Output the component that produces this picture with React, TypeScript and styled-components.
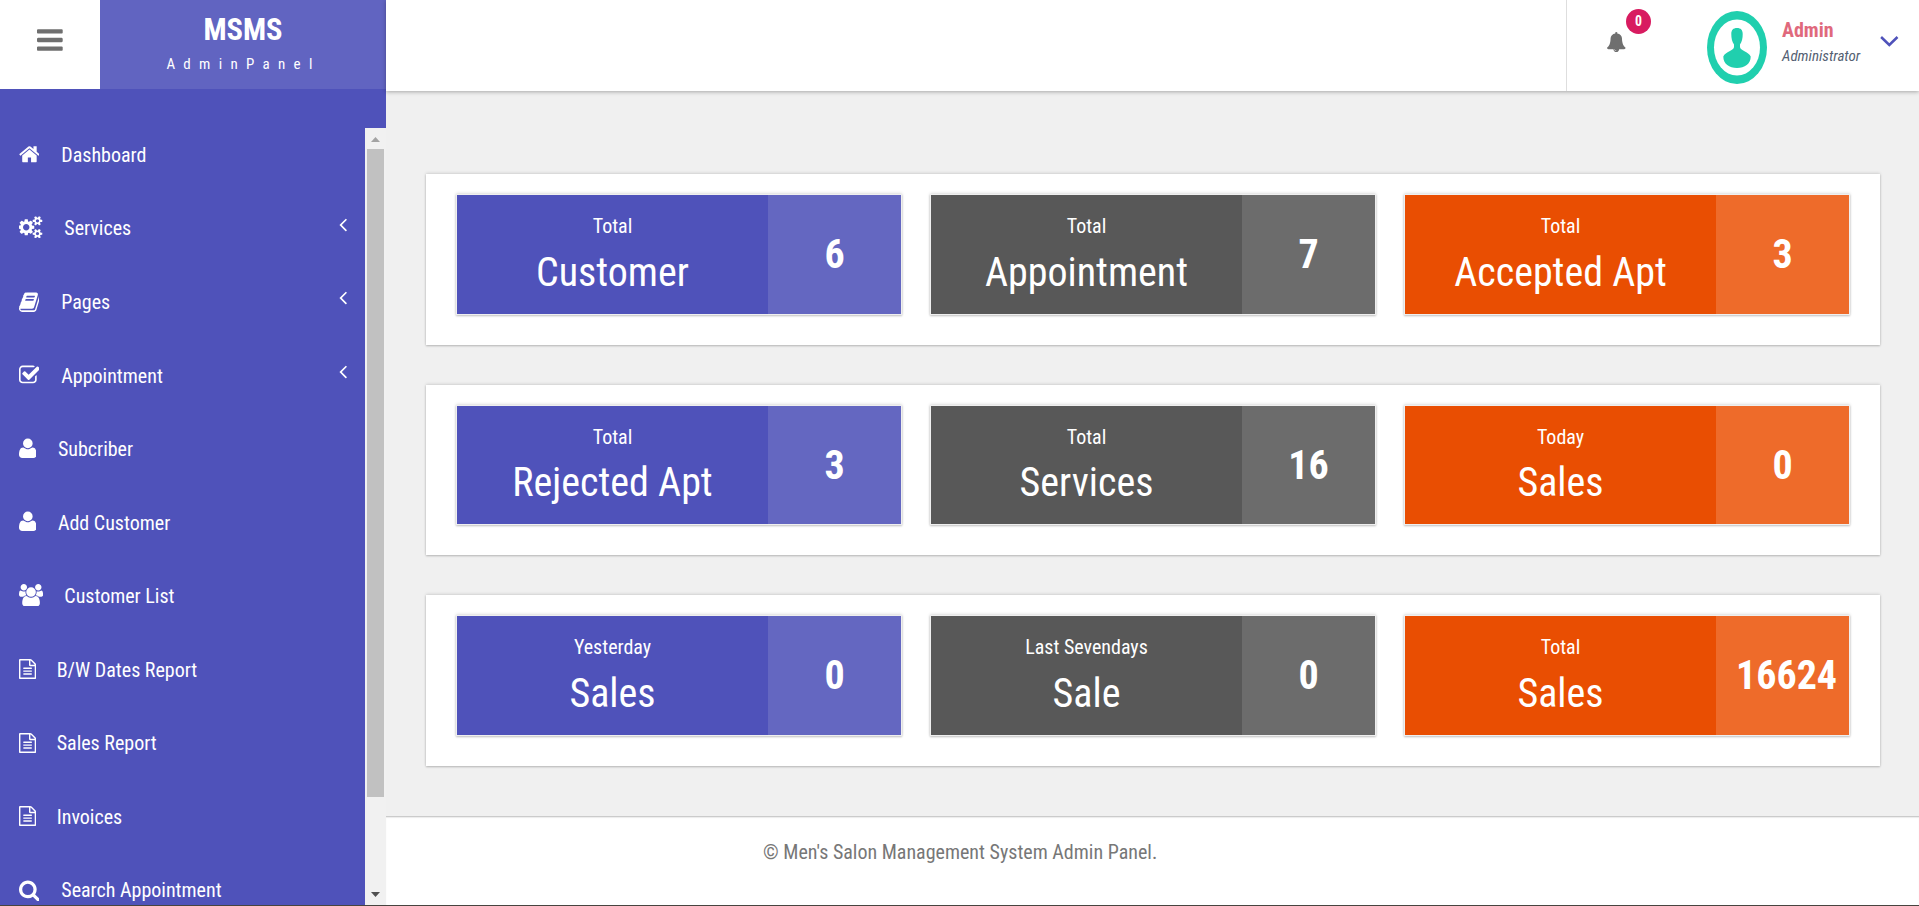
import React from "react";
import styled, { createGlobalStyle } from "styled-components";

const GlobalStyle = createGlobalStyle`
  *, *::before, *::after { box-sizing: border-box; }
  body {
    margin: 0;
    overflow: hidden;
    background: #f0f0f0;
    font-family: "Roboto Condensed", Roboto, sans-serif;
    font-stretch: 75%;
    font-size: 20px;
    color: #777;
  }
`;

const glyphs = {
  bars: "M1664 1344v128q0 26-19 45t-45 19h-1408q-26 0-45-19t-19-45v-128q0-26 19-45t45-19h1408q26 0 45 19t19 45zm0-512v128q0 26-19 45t-45 19h-1408q-26 0-45-19t-19-45v-128q0-26 19-45t45-19h1408q26 0 45 19t19 45zm0-512v128q0 26-19 45t-45 19h-1408q-26 0-45-19t-19-45v-128q0-26 19-45t45-19h1408q26 0 45 19t19 45z",
  home: "M1472 992v480q0 26-19 45t-45 19h-384v-384h-256v384h-384q-26 0-45-19t-19-45v-480q0-1 .5-3t.5-3l575-474 575 474q1 2 1 6zm223-69l-62 74q-8 9-21 11h-3q-13 0-21-7l-692-577-692 577q-12 8-24 7-13-2-21-11l-62-74q-8-10-7-23.5t11-21.5l719-599q32-26 76-26t76 26l244 204v-195q0-14 9-23t23-9h192q14 0 23 9t9 23v408l219 182q10 8 11 21.5t-7 23.5z",
  cogs: "M832 896q0-106-75-181t-181-75-181 75-75 181 75 181 181 75 181-75 75-181zm768 512q0-52-38-90t-90-38-90 38-38 90q0 53 37.5 90.5t90.5 37.5 90.5-37.5 37.5-90.5zm0-1024q0-52-38-90t-90-38-90 38-38 90q0 53 37.5 90.5t90.5 37.5 90.5-37.5 37.5-90.5zm-384 421v185q0 10-7 19.5t-16 10.5l-155 24q-11 35-32 76 34 48 90 115 7 11 7 20 0 12-7 19-23 30-82.5 89.5t-78.5 59.5q-11 0-21-7l-115-90q-37 19-77 31-11 108-23 155-7 24-30 24h-186q-11 0-20-7.5t-10-17.5l-23-153q-34-10-75-31l-118 89q-7 7-20 7-11 0-21-8-144-133-144-160 0-9 7-19 10-14 41-53t47-61q-23-44-35-82l-152-24q-10-1-17-9.5t-7-19.5v-185q0-10 7-19.5t16-10.5l155-24q11-35 32-76-34-48-90-115-7-11-7-20 0-12 7-20 22-30 82-89t79-59q11 0 21 7l115 90q34-18 77-32 11-108 23-154 7-24 30-24h186q11 0 20 7.5t10 17.5l23 153q34 10 75 31l118-89q8-7 20-7 11 0 21 8 144 133 144 160 0 8-7 19-12 16-42 54t-45 60q23 48 34 82l152 23q10 2 17 10.5t7 19.5zm640 533v140q0 16-149 31-12 27-30 52 51 113 51 138 0 4-4 7-122 71-124 71-8 0-46-47t-52-68q-20 2-30 2t-30-2q-14 21-52 68t-46 47q-2 0-124-71-4-3-4-7 0-25 51-138-18-25-30-52-149-15-149-31v-140q0-16 149-31 13-29 30-52-51-113-51-138 0-4 4-7 4-2 35-20t59-34 30-16q8 0 46 46.5t52 67.5q20-2 30-2t30 2q51-71 92-112l6-2q4 0 124 70 4 3 4 7 0 25-51 138 17 23 30 52 149 15 149 31zm0-1024v140q0 16-149 31-12 27-30 52 51 113 51 138 0 4-4 7-122 71-124 71-8 0-46-47t-52-68q-20 2-30 2t-30-2q-14 21-52 68t-46 47q-2 0-124-71-4-3-4-7 0-25 51-138-18-25-30-52-149-15-149-31v-140q0-16 149-31 13-29 30-52-51-113-51-138 0-4 4-7 4-2 35-20t59-34 30-16q8 0 46 46.5t52 67.5q20-2 30-2t30 2q51-71 92-112l6-2q4 0 124 70 4 3 4 7 0 25-51 138 17 23 30 52 149 15 149 31z",
  book: "M1703 478q40 57 18 129l-275 906q-19 64-76.5 107.5t-122.5 43.5h-923q-77 0-148.5-53.5t-99.5-131.5q-24-67-2-127 0-4 3-27t4-37q1-8-3-21.5t-3-19.5q2-11 8-21t16.5-23.5 16.5-23.5q23-38 45-91.5t30-91.5q3-10 .5-30t-.5-28q3-11 17-28t17-23q21-36 42-92t25-90q1-9-2.5-32t.5-28q4-13 22-30.5t22-22.5q19-26 42.5-84.5t27.5-96.5q1-8-3-25.5t-2-26.5q2-8 9-18t18-23 17-21q8-12 16.5-30.5t15-35 16-36 19.5-32 26.5-23.5 36-11.5 47.5 5.5l-1 3q38-9 51-9h761q74 0 114 56t18 130l-274 906q-36 119-71.5 153.5t-128.5 34.5h-869q-27 0-38 15-11 16-1 43 24 70 144 70h923q29 0 56-15.5t35-41.5l300-987q7-22 5-57 38 15 59 43zm-1064 2q-4 13 2 22.5t20 9.5h608q13 0 25.5-9.5t16.5-22.5l21-64q4-13-2-22.5t-20-9.5h-608q-13 0-25.5 9.5t-16.5 22.5zm-83 256q-4 13 2 22.5t20 9.5h608q13 0 25.5-9.5t16.5-22.5l21-64q4-13-2-22.5t-20-9.5h-608q-13 0-25.5 9.5t-16.5 22.5z",
  check: "M1472 930v318q0 119-84.5 203.5t-203.5 84.5h-832q-119 0-203.5-84.5t-84.5-203.5v-832q0-119 84.5-203.5t203.5-84.5h832q63 0 117 25 15 7 18 23 3 17-9 29l-49 49q-10 10-23 10-3 0-9-2-23-6-45-6h-832q-66 0-113 47t-47 113v832q0 66 47 113t113 47h832q66 0 113-47t47-113v-254q0-13 9-22l64-64q10-10 23-10 6 0 12 3 20 8 20 29zm231-489l-814 814q-24 24-57 24t-57-24l-430-430q-24-24-24-57t24-57l110-110q24-24 57-24t57 24l263 263 647-647q24-24 57-24t57 24l110 110q24 24 24 57t-24 57z",
  user: "M1600 1405q0 120-73 189.5t-194 69.5h-874q-121 0-194-69.5t-73-189.5q0-53 3.5-103.5t14-109 26.5-108.5 43-97.5 62-81 85.5-53.5 111.5-20q9 0 42 21.5t74.5 48 108 48 133.5 21.5 133.5-21.5 108-48 74.5-48 42-21.5q61 0 111.5 20t85.5 53.5 62 81 43 97.5 26.5 108.5 14 109 3.5 103.5zm-320-893q0 159-112.5 271.5t-271.5 112.5-271.5-112.5-112.5-271.5 112.5-271.5 271.5-112.5 271.5 112.5 112.5 271.5z",
  users: "M593 896q-162 5-265 128h-134q-82 0-138-40.5t-56-118.5q0-353 124-353 6 0 43.5 21t97.5 42.5 119 21.5q67 0 133-23-5 37-5 66 0 139 81 256zm1071 637q0 120-73 189.5t-194 69.5h-874q-121 0-194-69.5t-73-189.5q0-53 3.5-103.5t14-109 26.5-108.5 43-97.5 62-81 85.5-53.5 111.5-20q10 0 43 21.5t73 48 107 48 135 21.5 135-21.5 107-48 73-48 43-21.5q61 0 111.5 20t85.5 53.5 62 81 43 97.5 26.5 108.5 14 109 3.5 103.5zm-1024-1277q0 106-75 181t-181 75-181-75-75-181 75-181 181-75 181 75 75 181zm704 384q0 159-112.5 271.5t-271.5 112.5-271.5-112.5-112.5-271.5 112.5-271.5 271.5-112.5 271.5 112.5 112.5 271.5zm576 225q0 78-56 118.5t-138 40.5h-134q-103-123-265-128 81-117 81-256 0-29-5-66 66 23 133 23 59 0 119-21.5t97.5-42.5 43.5-21q124 0 124 353zm-128-609q0 106-75 181t-181 75-181-75-75-181 75-181 181-75 181 75 75 181z",
  file: "M1596 380q28 28 48 76t20 88v1152q0 40-28 68t-68 28h-1344q-40 0-68-28t-28-68v-1600q0-40 28-68t68-28h896q40 0 88 20t76 48zm-444-244v376h376q-10-29-22-41l-313-313q-12-12-41-22zm384 1528v-1024h-416q-40 0-68-28t-28-68v-416h-768v1536h1280zm-1024-864q0-14 9-23t23-9h704q14 0 23 9t9 23v64q0 14-9 23t-23 9h-704q-14 0-23-9t-9-23v-64zm736 224q14 0 23 9t9 23v64q0 14-9 23t-23 9h-704q-14 0-23-9t-9-23v-64q0-14 9-23t23-9h704zm0 256q14 0 23 9t9 23v64q0 14-9 23t-23 9h-704q-14 0-23-9t-9-23v-64q0-14 9-23t23-9h704z",
  search: "M1216 832q0-185-131.5-316.5t-316.5-131.5-316.5 131.5-131.5 316.5 131.5 316.5 316.5 131.5 316.5-131.5 131.5-316.5zm512 832q0 52-38 90t-90 38q-54 0-90-38l-343-342q-179 124-399 124-143 0-273.5-55.5t-225-150-150-225-55.5-273.5 55.5-273.5 150-225 225-150 273.5-55.5 273.5 55.5 225 150 150 225 55.5 273.5q0 220-124 399l343 343q37 37 37 90z",
  angleLeft: "M1203 544q0 13-10 23l-393 393 393 393q10 10 10 23t-10 23l-50 50q-10 10-23 10t-23-10l-466-466q-10-10-10-23t10-23l466-466q10-10 23-10t23 10l50 50q10 10 10 23z",
  bell: "M912 1696q0-16-16-16-59 0-101.5-42.5t-42.5-101.5q0-16-16-16t-16 16q0 73 51.5 124.5t124.5 51.5q16 0 16-16zm816-288q0 52-38 90t-90 38h-448q0 106-75 181t-181 75-181-75-75-181h-448q-52 0-90-38t-38-90q50-42 91-88t85-119.5 74.5-158.5 50-206 19.5-260q0-152 117-282.5t307-158.5q-8-19-8-39 0-40 28-68t68-28 68 28 28 68q0 20-8 39 190 28 307 158.5t117 282.5q0 139 19.5 260t50 206 74.5 158.5 85 119.5 91 88z",
};

type GlyphName = keyof typeof glyphs;

/* left edge and advance width of every glyph, in units of 1/1792 em */
const boxes: Record<GlyphName, [number, number]> = {
  bars: [128, 1536],
  home: [64, 1664],
  cogs: [0, 1920],
  book: [64, 1664],
  check: [64, 1664],
  user: [192, 1408],
  users: [0, 1920],
  file: [128, 1536],
  search: [64, 1664],
  angleLeft: [576, 640],
  bell: [64, 1664],
};

function Glyph({ name, em }: { name: GlyphName; em: number }) {
  const [left, width] = boxes[name];
  return (
    <svg
      width={(width / 1792) * em}
      height={em}
      viewBox={`${left} 0 ${width} 1792`}
      fill="currentColor"
    >
      <path d={glyphs[name]} />
    </svg>
  );
}

const Page = styled.div`
  display: flex;
  height: 906px;
  border-bottom: 1px solid #47443f;
  overflow: hidden;
`;

const Sidebar = styled.aside`
  display: flex;
  flex-direction: column;
  flex: 0 0 386px;
  background: #4f52ba;
  color: #fff;
`;

const Brand = styled.div`
  display: flex;
  flex: 0 0 89px;
  margin-bottom: 39px;
`;

const MenuButton = styled.button`
  display: flex;
  flex: 0 0 100px;
  justify-content: center;
  padding: 25px 0 0;
  border: 0;
  background: #fff;
  color: #6f6f6f;
`;

const Logo = styled.div`
  flex: 1;
  background: #6164c1;
  text-align: center;
`;

const LogoName = styled.div`
  padding-top: 12px;
  font-size: 30.5px;
  font-weight: 700;
  line-height: 36px;
`;

const LogoSub = styled.div`
  margin-top: 5px;
  padding-left: 1px;
  font-size: 15px;
  line-height: 22px;
  letter-spacing: 8.3px;
`;

const MenuArea = styled.div`
  display: flex;
  flex: 1;
  min-height: 0;
`;

const Menu = styled.nav`
  flex: 1;
  overflow: hidden;
`;

const MenuItem = styled.a`
  display: flex;
  align-items: flex-start;
  height: 73.57px;
  padding: 0 18px 0 18.5px;
`;

const IconSlot = styled.span<{ $width: number; $top: number }>`
  display: block;
  flex: 0 0 ${(p) => p.$width}px;
  padding-top: ${(p) => p.$top}px;
  svg { display: block; }
`;

const MenuLabel = styled.span`
  flex: 1;
  padding-top: 0.87px;
  line-height: 52px;
  white-space: nowrap;
`;

const Arrow = styled.span`
  padding-top: 11px;
  svg { display: block; }
`;

const ScrollTrack = styled.div`
  display: flex;
  flex: 0 0 21px;
  flex-direction: column;
  align-items: center;
  background: #f1f1f1;
`;

const ScrollButton = styled.div<{ $drop?: number }>`
  display: flex;
  flex: 0 0 21px;
  align-items: center;
  justify-content: center;
  padding-top: ${(p) => p.$drop ?? 0}px;
`;

const ScrollThumb = styled.div`
  width: 17px;
  height: 648px;
  margin-bottom: auto;
  background: #c1c1c1;
`;

const Main = styled.main`
  display: flex;
  flex: 1;
  flex-direction: column;
  min-width: 0;
`;

const Header = styled.header`
  display: flex;
  flex: 0 0 91px;
  justify-content: flex-end;
  background: #fff;
  box-shadow: 0 1px 4px rgba(0, 0, 0, 0.3);
`;

const Notifications = styled.div`
  width: 141px;
  padding: 32px 0 0 40px;
  border-left: 1px solid #dedede;
  color: #6f6f6f;
`;

const BellBox = styled.div`
  position: relative;
  width: 20px;
  svg { display: block; }
`;

const Badge = styled.span`
  position: absolute;
  top: -23px;
  left: 19px;
  width: 25px;
  height: 25px;
  border-radius: 50%;
  background: #d81b60;
  color: #fff;
  font-size: 13.75px;
  font-weight: 700;
  line-height: 25px;
  text-align: center;
`;

const Profile = styled.div`
  display: flex;
  width: 212px;
`;

const Avatar = styled.svg`
  flex: none;
  margin-top: 11px;
`;

const Identity = styled.div`
  width: 98px;
  margin-left: 15px;
  padding-top: 18px;
`;

const UserName = styled.div`
  color: #e0697c;
  font-weight: 700;
  line-height: 24px;
`;

const UserRole = styled.div`
  margin-top: 4px;
  color: #555f73;
  font-size: 15px;
  font-style: italic;
  line-height: 20px;
`;

const Caret = styled.svg`
  margin-top: 35px;
`;

const Content = styled.div`
  display: flex;
  flex: 1;
  flex-direction: column;
  gap: 40px;
  padding: 83.3px 39px 0 40px;
`;

const Panel = styled.section`
  display: grid;
  grid-template-columns: repeat(3, 1fr);
  gap: 28px;
  height: 170.5px;
  padding: 20px 30px 30px;
  background: #fff;
  box-shadow: 0 -1px 3px rgba(0, 0, 0, 0.12), 0 1px 2px rgba(0, 0, 0, 0.24);
`;

type Tone = "indigo" | "grey" | "orange";

const tones: Record<Tone, [string, string]> = {
  indigo: ["#4f52ba", "#6467c1"],
  grey: ["#585858", "#6c6c6c"],
  orange: ["#e94e02", "#ee6b2a"],
};

const Tile = styled.article<{ $tone: Tone }>`
  display: grid;
  grid-template-columns: 311px minmax(0, 1fr);
  border: 1px solid #efefef;
  background: ${(p) => tones[p.$tone][0]};
  background-clip: padding-box;
  box-shadow: 0 -1px 3px rgba(0, 0, 0, 0.12), 0 1px 2px rgba(0, 0, 0, 0.24);
  color: #fff;
`;

const TileText = styled.div`
  padding-top: 19px;
  text-align: center;
`;

const TileLabel = styled.div`
  line-height: 24px;
`;

const TileTitle = styled.div`
  margin-top: 10.6px;
  font-size: 40px;
  line-height: 48px;
`;

const TileCount = styled.div<{ $tone: Tone }>`
  padding: 36px 20px 0;
  background: ${(p) => tones[p.$tone][1]};
  font-size: 40px;
  font-weight: 700;
  line-height: 48px;
  text-align: center;
  white-space: nowrap;
`;

const Footer = styled.footer`
  flex: 0 0 89px;
  padding: 23px 0 0 377px;
  border-top: 1px solid #cbcbcb;
  background: #fff;
  box-shadow: inset 0 1px 1px #ececec;
  line-height: 24px;
`;

const menu: {
  icon: GlyphName;
  label: string;
  slot: number;
  top: number;
  em?: number;
  nested?: boolean;
}[] = [
  { icon: "home", label: "Dashboard", slot: 42.8, top: 15 },
  { icon: "cogs", label: "Services", slot: 45.8, top: 14.3, nested: true },
  { icon: "book", label: "Pages", slot: 42.8, top: 15.4, nested: true },
  { icon: "check", label: "Appointment", slot: 42.8, top: 15, nested: true },
  { icon: "user", label: "Subcriber", slot: 39.4, top: 14.5 },
  { icon: "user", label: "Add Customer", slot: 39.4, top: 14.5 },
  { icon: "users", label: "Customer List", slot: 45.8, top: 14.3 },
  { icon: "file", label: "B/W Dates Report", slot: 38.2, top: 16, em: 20 },
  { icon: "file", label: "Sales Report", slot: 38.2, top: 16, em: 20 },
  { icon: "file", label: "Invoices", slot: 38.2, top: 16, em: 20 },
  { icon: "search", label: "Search Appointment", slot: 42.8, top: 15 },
];

const rows: { label: string; title: string; count: string }[][] = [
  [
    { label: "Total", title: "Customer", count: "6" },
    { label: "Total", title: "Appointment", count: "7" },
    { label: "Total", title: "Accepted Apt", count: "3" },
  ],
  [
    { label: "Total", title: "Rejected Apt", count: "3" },
    { label: "Total", title: "Services", count: "16" },
    { label: "Today", title: "Sales", count: "0" },
  ],
  [
    { label: "Yesterday", title: "Sales", count: "0" },
    { label: "Last Sevendays", title: "Sale", count: "0" },
    { label: "Total", title: "Sales", count: "16624" },
  ],
];

const order: Tone[] = ["indigo", "grey", "orange"];

export default function App() {
  return (
    <>
      <GlobalStyle />
      <Page>
        <Sidebar>
          <Brand>
            <MenuButton aria-label="Toggle menu">
              <Glyph name="bars" em={30} />
            </MenuButton>
            <Logo>
              <LogoName>MSMS</LogoName>
              <LogoSub>AdminPanel</LogoSub>
            </Logo>
          </Brand>
          <MenuArea>
            <Menu>
              {menu.map(({ icon, label, slot, top, em = 22.5, nested }) => (
                <MenuItem key={label}>
                  <IconSlot $width={slot} $top={top}>
                    <Glyph name={icon} em={em} />
                  </IconSlot>
                  <MenuLabel>{label}</MenuLabel>
                  {nested && (
                    <Arrow>
                      <Glyph name="angleLeft" em={22.5} />
                    </Arrow>
                  )}
                </MenuItem>
              ))}
            </Menu>
            <ScrollTrack>
              <ScrollButton $drop={2}>
                <svg width="9" height="5" viewBox="0 0 9 5">
                  <path d="M0 5 4.5 0 9 5z" fill="#a3a3a3" />
                </svg>
              </ScrollButton>
              <ScrollThumb />
              <ScrollButton>
                <svg width="9" height="5" viewBox="0 0 9 5">
                  <path d="M0 0 4.5 5 9 0z" fill="#505050" />
                </svg>
              </ScrollButton>
            </ScrollTrack>
          </MenuArea>
        </Sidebar>
        <Main>
          <Header>
            <Notifications>
              <BellBox>
                <Glyph name="bell" em={20} />
                <Badge>0</Badge>
              </BellBox>
            </Notifications>
            <Profile>
              <Avatar width="60" height="73" viewBox="0 0 60 73">
                <ellipse cx="30" cy="36.5" rx="30" ry="36.5" fill="#20cfae" />
                <ellipse cx="30" cy="36.5" rx="23" ry="28.1" fill="#fff" />
                <path
                  d="M30 17c3.800 0 5.700 2 5.700 6 0 4.500-.7 7.500-2.700 10.500v2.500c0 3.500 8.500 4.500 10.700 9.500 0 7.500-6 11.500-13.700 11.500s-13.700-4-13.700-11.500c2.200-5 10.700-6 10.700-9.500v-2.500c-2-3-2.700-6-2.700-10.500 0-4 1.900-6 5.700-6z"
                  fill="#20cfae"
                />
              </Avatar>
              <Identity>
                <UserName>Admin</UserName>
                <UserRole>Administrator</UserRole>
              </Identity>
              <Caret width="19" height="13" viewBox="0 0 19 13">
                <path d="M1.100 2 9.300 10 17.500 2" fill="none" stroke="#4f52ba" strokeWidth="2.500" />
              </Caret>
            </Profile>
          </Header>
          <Content>
            {rows.map((row, i) => (
              <Panel key={i}>
                {row.map((tile, j) => (
                  <Tile key={j} $tone={order[j]}>
                    <TileText>
                      <TileLabel>{tile.label}</TileLabel>
                      <TileTitle>{tile.title}</TileTitle>
                    </TileText>
                    <TileCount $tone={order[j]}>{tile.count}</TileCount>
                  </Tile>
                ))}
              </Panel>
            ))}
          </Content>
          <Footer>© Men's Salon Management System Admin Panel.</Footer>
        </Main>
      </Page>
    </>
  );
}
